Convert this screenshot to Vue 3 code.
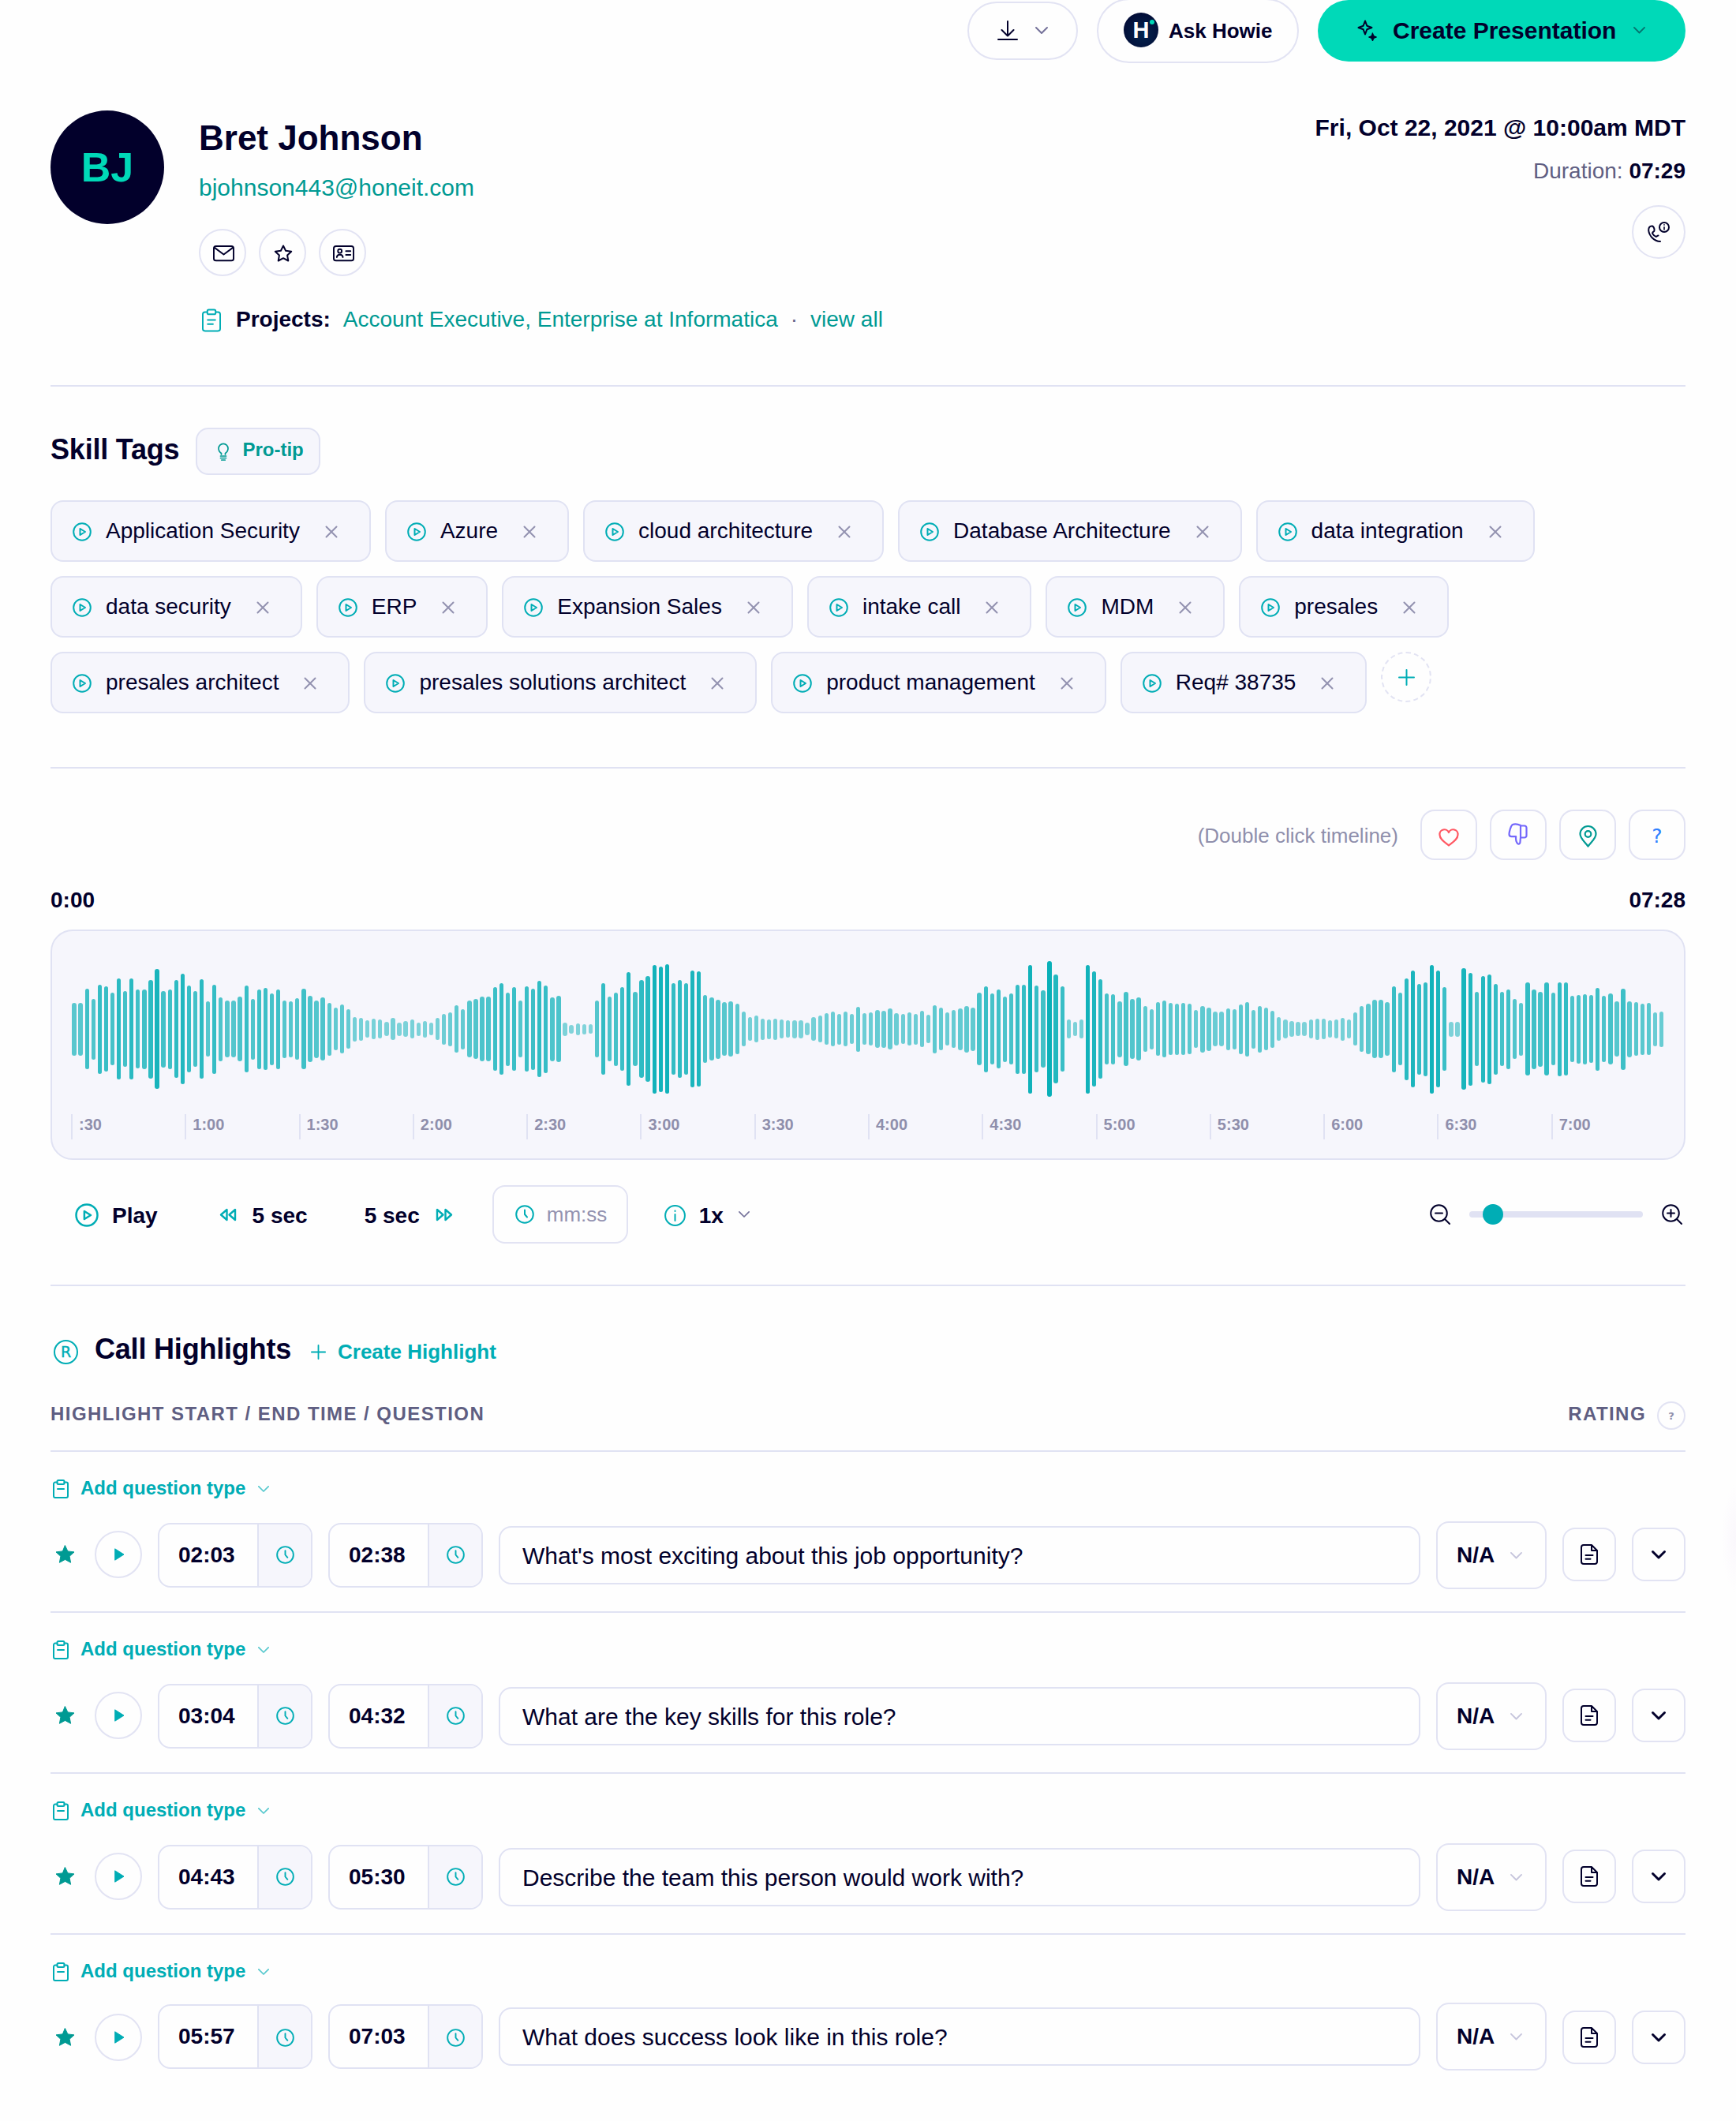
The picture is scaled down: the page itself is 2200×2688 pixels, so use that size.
<template>
  <main class="page">
    <!-- Top actions -->
    <header class="actions">
      <button class="pill download">
        <Icon name="download" />
        <Icon name="chevron" :size="16" class="muted-dark" />
      </button>
      <button class="pill howie">
        <span class="howie-logo">H<i></i></span>
        Ask Howie
      </button>
      <button class="pill create">
        <Icon name="sparkle" />
        <span>Create Presentation</span>
        <Icon name="chevron" :size="15" class="create-chevron" />
      </button>
    </header>

    <!-- Candidate profile -->
    <section class="profile">
      <div class="avatar">BJ</div>
      <div class="person">
        <h1>Bret Johnson</h1>
        <a class="email">bjohnson443@honeit.com</a>
        <div class="contact">
          <button class="round"><Icon name="mail" :size="27" /></button>
          <button class="round"><Icon name="star" /></button>
          <button class="round"><Icon name="card" :size="27" /></button>
        </div>
        <div class="projects">
          <Icon name="clipboard" />
          <strong>Projects:</strong>
          <a>Account Executive, Enterprise at Informatica</a>
          <span class="dot">·</span>
          <a>view all</a>
        </div>
      </div>
      <div class="meta">
        <p class="date">Fri, Oct 22, 2021 @ 10:00am MDT</p>
        <p class="duration">Duration: <strong>07:29</strong></p>
        <button class="round phone"><Icon name="phone" /></button>
      </div>
    </section>

    <!-- Skill tags -->
    <section class="skills">
      <div class="skills-head">
        <h2>Skill Tags</h2>
        <button class="pro-tip"><Icon name="bulb" /><span>Pro-tip</span></button>
      </div>
      <div class="tags">
        <div v-for="tag in tags" :key="tag" class="tag">
          <span class="tag-play"><Icon name="play" :size="24" /></span>
          <span>{{ tag }}</span>
          <span class="tag-remove"><Icon name="close" /></span>
        </div>
        <button class="add-tag"><Icon name="plus" :size="21" /></button>
      </div>
    </section>

    <!-- Waveform player -->
    <section class="player">
      <div class="markers">
        <span class="hint">(Double click timeline)</span>
        <button class="marker red"><Icon name="heart" /></button>
        <button class="marker purple"><Icon name="thumb" /></button>
        <button class="marker green"><Icon name="pin" /></button>
        <button class="marker blue">?</button>
      </div>
      <div class="times">
        <span>0:00</span>
        <span>07:28</span>
      </div>
      <div class="timeline">
        <div class="wave">
          <span
            v-for="(h, i) in bars"
            :key="i"
            class="bar"
            :style="{ height: h + 'px', opacity: 0.44 + h / 330 }"
          ></span>
        </div>
        <div class="ticks">
          <span v-for="t in ticks" :key="t" class="tick">{{ t }}</span>
        </div>
      </div>
      <div class="controls">
        <button class="ctl play"><Icon name="play" :size="30" /><span>Play</span></button>
        <button class="ctl back"><Icon name="rewind" /><span>5 sec</span></button>
        <button class="ctl fwd"><span>5 sec</span><Icon name="forward" /></button>
        <div class="goto"><Icon name="clock" :size="24" /><span>mm:ss</span></div>
        <button class="ctl speed">
          <Icon name="info" /><span>1x</span><Icon name="chevron" :size="14" class="muted-dark" />
        </button>
        <div class="zoom">
          <Icon name="zoomOut" />
          <div class="track"><div class="knob" :style="{ left: zoom + 'px' }"></div></div>
          <Icon name="zoomIn" />
        </div>
      </div>
    </section>

    <!-- Call highlights -->
    <section class="highlights">
      <div class="hl-head">
        <span class="r-mark">R</span>
        <h2>Call Highlights</h2>
        <button class="create-hl"><Icon name="plus" :size="19" /><span>Create Highlight</span></button>
      </div>
      <div class="hl-columns">
        <span>HIGHLIGHT START / END TIME / QUESTION</span>
        <span class="rating-label">RATING</span>
        <span class="help">?</span>
      </div>
      <article v-for="item in highlights" :key="item.start" class="highlight">
        <button class="type">
          <Icon name="clipboardSmall" /><span>Add question type</span>
          <Icon name="chevron" :size="14" class="faded" />
        </button>
        <div class="row">
          <span class="fav"><Icon name="starFilled" /></span>
          <button class="round play-btn"><Icon name="playFilled" /></button>
          <div v-for="time in [item.start, item.end]" :key="time" class="time-box">
            <span class="time">{{ time }}</span>
            <span class="time-icon"><Icon name="clock" :size="23" /></span>
          </div>
          <div class="question">{{ item.question }}</div>
          <div class="rating">N/A <Icon name="chevron" :size="15" /></div>
          <button class="square"><Icon name="doc" /></button>
          <button class="square"><Icon name="chevronBold" /></button>
        </div>
      </article>
    </section>
  </main>
</template>

<script setup>
import { ref, h } from "vue";

// [width, height, markup]
const icons = {
  download: [26, 26, '<path d="M13 1v18.5M5.5 12l7.5 7.5 7.5-7.5M1 24h24"/>'],
  chevron: [16, 9, '<path d="M1 1l7 7 7-7"/>'],
  chevronBold: [18, 11, '<path stroke-width="3" d="M1.5 1.5L9 9l7.5-7.5"/>'],
  sparkle: [26, 28, '<path d="M10 1.5l2.3 6.2 6.2 2.3-6.2 2.3-2.3 6.2-2.3-6.2L1.5 10l6.2-2.3z"/><path fill="currentColor" stroke-width="1" d="M19.5 17l1.5 3.5 3.5 1.5-3.5 1.5-1.5 3.5-1.5-3.5-3.5-1.5 3.5-1.5z"/>'],
  mail: [28, 21, '<rect x="1" y="1" width="26" height="19" rx="3"/><path d="M2 3l12 9 12-9"/>'],
  star: [24, 22, '<path d="M12 1.5l3.1 6.3 7.1 1-5.1 4.8 1.2 6.9-6.3-3.3-6.3 3.3 1.2-6.9-5.1-4.8 7.1-1z"/>'],
  starFilled: [25, 23, '<path fill="currentColor" stroke-width="1" d="M12.5.8l3.4 7.1 8.1 1-5.9 5.4 1.5 8-7.1-3.9-7.1 3.9 1.5-8L1 8.9l8.1-1z"/>'],
  card: [28, 21, '<rect x="1" y="1" width="26" height="19" rx="3"/><circle cx="9" cy="7.5" r="2.5"/><path d="M5 15.5c.6-4.500 7.400-4.500 8 0M17 7.500h6M17 12.500h6"/>'],
  clipboard: [25, 30, '<path d="M7 4H4a3 3 0 0 0-3 3v19a3 3 0 0 0 3 3h17a3 3 0 0 0 3-3V7a3 3 0 0 0-3-3h-3"/><rect x="7" y="1" width="11" height="6" rx="2"/><path d="M7.500 14.500h10M7.500 20h7"/>'],
  clipboardSmall: [20, 24, '<path d="M5.500 3.500H3a2 2 0 0 0-2 2V21a2 2 0 0 0 2 2h14a2 2 0 0 0 2-2V5.500a2 2 0 0 0-2-2h-2.500"/><rect x="5.500" y="1" width="9" height="5" rx="1.500"/><path d="M6 12h8"/>'],
  phone: [28, 27, '<path d="M6 5.500C2.500 5 1 8 1.200 11 2 18 8 24.500 16 25M6 5.500c2 1 3.200 4.500 2.300 6.300-1.600 1-3 1.900-2 3.500 1 1.600 2.600 3 4.200 3.600 1.200 0 1.700-1.500 3-1.500"/><circle cx="21" cy="7" r="6"/><path stroke-width="1.600" d="M21 6.700v3.300M21 3.800v.3"/>'],
  bulb: [14, 23, '<path d="M4.500 15v-1.500C2.200 12 1 10 1 7.300a6 6 0 0 1 12 0c0 2.700-1.200 4.700-3.500 6.200V15M3.500 17h7M3.500 19.500h7M4.800 22h4.400" stroke-width="1.700"/>'],
  play: [24, 24, '<circle cx="12" cy="12" r="10.800"/><path d="M9.500 8l6.500 4-6.500 4z"/>'],
  playFilled: [13, 16, '<path fill="currentColor" stroke-width="1" d="M1 1l11 7-11 7z"/>'],
  close: [14, 14, '<path d="M.5.500l13 13M13.500.500l-13 13"/>'],
  plus: [21, 21, '<path d="M10.500 1v19M1 10.500h19"/>'],
  heart: [26, 23, '<path stroke-width="2.200" d="M13 21.500C8 17.500 1.500 13.500 1.500 8a6 6 0 0 1 11.500-3A6 6 0 0 1 24.500 8c0 5.500-6.500 9.500-11.500 13.500z"/>'],
  thumb: [25, 28, '<path stroke-width="2.200" d="M16 3C12 1 8 1 5.500 2.200 3.500 4 1.700 11 1.500 14c0 2 1 3.200 3 3.200h5.600c-.3 3.300.3 6.800 2 8.800 1.400 1.200 3 .4 3.300-1.200L16 18zM16 3.500h5a2.500 2.500 0 0 1 2.500 2.500v10a2.500 2.500 0 0 1-2.500 2.500h-5"/>'],
  pin: [23, 28, '<path stroke-width="2.200" d="M11.500 26.500C7 20.500 1.500 16.500 1.500 11a10 10 0 0 1 20 0c0 5.500-5.500 9.500-10 15.500z"/><circle cx="11.500" cy="11" r="3.800" stroke-width="2.200"/>'],
  rewind: [22, 17, '<path stroke-width="2.400" d="M9.500 2v13L2 8.500zM20 2v13l-7.500-6.500z"/>'],
  forward: [22, 17, '<path stroke-width="2.400" d="M12.500 2v13l7.500-6.500zM2 2v13l7.500-6.500z"/>'],
  clock: [24, 24, '<circle cx="12" cy="12" r="10.800"/><path d="M12 6.500V12l3 3.500"/>'],
  info: [27, 27, '<circle cx="13.500" cy="13.500" r="12.400"/><path d="M13.500 12v8M13.500 7.500v.5"/>'],
  zoomOut: [26, 26, '<circle cx="11.500" cy="11.500" r="10.300"/><path d="M19 19l6 6M7 11.500h9"/>'],
  zoomIn: [26, 26, '<circle cx="11.500" cy="11.500" r="10.300"/><path d="M19 19l6 6M7 11.500h9M11.500 7v9"/>'],
  doc: [22, 26, '<path d="M14 1H4a3 3 0 0 0-3 3v18a3 3 0 0 0 3 3h14a3 3 0 0 0 3-3V8zM14 1v7h7M6.500 14h9M6.500 18.700h6"/>'],
};

function Icon(props) {
  const [w, hgt, markup] = icons[props.name];
  const width = props.size || w;
  return h("svg", {
    width,
    height: (width * hgt) / w,
    viewBox: `0 0 ${w} ${hgt}`,
    fill: "none",
    stroke: "currentColor",
    "stroke-width": 2,
    "stroke-linecap": "round",
    "stroke-linejoin": "round",
    innerHTML: markup,
  });
}
Icon.props = ["name", "size"];

const zoom = ref(17);

const tags = ref([
  "Application Security",
  "Azure",
  "cloud architecture",
  "Database Architecture",
  "data integration",
  "data security",
  "ERP",
  "Expansion Sales",
  "intake call",
  "MDM",
  "presales",
  "presales architect",
  "presales solutions architect",
  "product management",
  "Req# 38735",
]);

const ticks = [
  ":30", "1:00", "1:30", "2:00", "2:30", "3:00", "3:30",
  "4:00", "4:30", "5:00", "5:30", "6:00", "6:30", "7:00",
];

// Peak levels, one per bar
const peaks = [
  101, 101, 153, 116, 170, 162, 138, 192, 144, 192, 150, 152, 187, 228, 145, 151, 186, 210, 165, 144,
  189, 105, 170, 121, 108, 108, 123, 165, 116, 151, 156, 136, 152, 110, 107, 117, 153, 126, 110, 120,
  100, 81, 93, 75, 47, 44, 33, 39, 36, 27, 42, 25, 30, 36, 26, 32, 24, 42, 58, 65,
  90, 77, 108, 114, 123, 123, 159, 174, 140, 159, 108, 162, 155, 183, 166, 121, 126, 26, 17, 23,
  20, 18, 108, 174, 123, 139, 159, 216, 141, 186, 201, 244, 238, 246, 174, 186, 174, 222, 219, 129,
  120, 113, 102, 105, 96, 66, 45, 51, 41, 38, 41, 36, 33, 35, 35, 24, 45, 51, 60, 66,
  59, 66, 57, 86, 60, 63, 72, 70, 78, 62, 57, 63, 59, 69, 54, 91, 81, 63, 72, 80,
  88, 82, 138, 163, 135, 150, 124, 135, 170, 170, 244, 165, 147, 258, 207, 162, 36, 27, 36, 244,
  219, 189, 135, 133, 107, 141, 114, 120, 87, 77, 102, 108, 99, 97, 99, 96, 72, 89, 82, 66,
  66, 80, 76, 95, 104, 74, 89, 81, 71, 45, 36, 30, 27, 27, 36, 41, 39, 33, 36, 44,
  36, 63, 87, 96, 111, 111, 102, 163, 138, 194, 222, 172, 178, 244, 222, 159, 28, 28, 231, 215,
  141, 202, 209, 172, 141, 152, 114, 101, 177, 152, 143, 177, 138, 178, 177, 126, 130, 134, 129, 157,
  126, 135, 105, 155, 106, 102, 98, 99, 65, 68,
];
const bars = peaks.map((p) => Math.round((p * 2) / 3));

const highlights = ref([
  { start: "02:03", end: "02:38", question: "What's most exciting about this job opportunity?" },
  { start: "03:04", end: "04:32", question: "What are the key skills for this role?" },
  { start: "04:43", end: "05:30", question: "Describe the team this person would work with?" },
  { start: "05:57", end: "07:03", question: "What does success look like in this role?" },
]);
</script>

<style>
body {
  margin: 0;
  background: #fefefe;
}
</style>

<style scoped>
.page {
  box-sizing: border-box;
  height: 2688px;
  padding: 0 64px;
  overflow: hidden;
  font-family: "Liberation Sans", Arial, sans-serif;
  font-size: 28px;
  color: #02002b;
  background: radial-gradient(ellipse 18px 70px at 2200px 1950px, #faf7fc, #fefefe);
}

.page *,
.page *::before {
  box-sizing: border-box;
}

svg {
  display: block;
  flex: none;
  overflow: visible;
}

h1,
h2,
p {
  margin: 0;
}

button {
  display: flex;
  align-items: center;
  padding: 0;
  border: 0;
  background: none;
  font: inherit;
  color: inherit;
  white-space: nowrap;
}

a {
  color: #009a93;
}

/* Top actions */
.actions {
  display: flex;
  justify-content: flex-end;
  align-items: center;
  gap: 24px;
  height: 78px;
}

.pill {
  flex: none;
  border: 2px solid #e2e3f3;
  border-radius: 41px;
  font-weight: bold;
}

.download {
  width: 140px;
  height: 74px;
  padding-left: 36px;
  gap: 22px;
}

.muted-dark {
  color: #75729a;
}

.download .muted-dark {
  margin-bottom: 2px;
}

.howie {
  width: 256px;
  height: 82px;
  padding-left: 32px;
  gap: 13px;
  font-size: 26px;
}

.howie-logo {
  position: relative;
  width: 44px;
  height: 44px;
  margin-bottom: 2px;
  border-radius: 50%;
  background: radial-gradient(circle at 55% 60%, #04264f, #020a35 80%);
  color: #fff;
  font-size: 29px;
  line-height: 44px;
  text-align: center;
}

.howie-logo i {
  position: absolute;
  top: 9px;
  right: 5px;
  width: 6px;
  height: 6px;
  border-radius: 50%;
  background: #00d9b8;
}

.create {
  width: 466px;
  height: 78px;
  padding-left: 50px;
  border: 0;
  background: #00d9b8;
  font-size: 30px;
}

.create span {
  margin: 0 22px 0 19px;
}

.create-chevron {
  margin-bottom: 2px;
  color: #04756f;
}

/* Profile */
.profile {
  display: flex;
  height: 350px;
  margin-top: 62px;
  border-bottom: 2px solid #e0e2f3;
}

.avatar {
  width: 144px;
  height: 144px;
  border-radius: 50%;
  background: #02002b;
  color: #00d9b8;
  font-size: 52px;
  font-weight: bold;
  line-height: 145px;
  text-align: center;
}

.person {
  margin-left: 44px;
  padding-top: 10px;
}

h1 {
  font-size: 44px;
  line-height: 50px;
}

.email {
  display: block;
  margin-top: 20px;
  font-size: 30px;
  line-height: 36px;
}

.contact {
  display: flex;
  gap: 16px;
  margin-top: 34px;
}

.round {
  justify-content: center;
  width: 60px;
  height: 60px;
  border: 2px solid #e2e3f3;
  border-radius: 50%;
}

.contact .round {
  padding: 2px 0 0 2px;
}

.projects {
  display: flex;
  align-items: center;
  margin-top: 38px;
  line-height: 32px;
}

.projects svg {
  margin: 3px 19px 0 4px;
  color: #00adb5;
}

.projects strong {
  margin-right: 16px;
}

.projects svg {
  width: 24px;
}

.dot {
  margin: 0 16px 0 16px;
  color: #66658a;
}

.meta {
  display: flex;
  flex-direction: column;
  align-items: flex-end;
  margin-left: auto;
  padding-top: 4px;
}

.date {
  font-size: 30px;
  font-weight: bold;
  line-height: 36px;
}

.duration {
  margin-top: 21px;
  line-height: 32px;
  color: #5f5e82;
}

.duration strong {
  color: #02002b;
}

.phone {
  width: 68px;
  height: 68px;
  margin-top: 27px;
}

/* Skill tags */
.skills {
  height: 484px;
  padding-top: 52px;
  border-bottom: 2px solid #e0e2f3;
}

.skills-head {
  display: flex;
  align-items: center;
  gap: 21px;
}

h2 {
  font-size: 36px;
  letter-spacing: -0.2px;
  line-height: 43px;
}

.skills-head h2 {
  padding-bottom: 5px;
}

.pro-tip {
  width: 158px;
  height: 60px;
  padding-left: 26px;
  gap: 17px;
  border: 2px solid #e0e2f3;
  border-radius: 16px;
  background: #f6f6fc;
  color: #009a93;
  font-size: 24px;
  font-weight: bold;
}

.pro-tip span {
  padding-bottom: 4px;
}

.tags {
  display: flex;
  flex-wrap: wrap;
  gap: 18px;
  width: 1960px;
  margin-top: 32px;
}

.tag {
  display: flex;
  align-items: center;
  height: 78px;
  padding: 0 34px 0 24px;
  border: 2px solid #e0e2f3;
  border-radius: 16px;
  background: #f6f6fc;
}

.tag-play {
  width: 28px;
  margin-right: 16px;
  padding: 2px 0 0 2px;
  color: #00adb5;
}

.tag-remove {
  display: flex;
  justify-content: center;
  width: 28px;
  margin-left: 26px;
  padding-top: 2px;
  color: #9392b0;
}

.add-tag {
  justify-content: center;
  width: 64px;
  height: 64px;
  border: 2px dashed #e2e3f3;
  border-radius: 50%;
  color: #00adb5;
}

/* Player */
.player {
  height: 656px;
  padding-top: 52px;
  border-bottom: 2px solid #e0e2f3;
}

.markers {
  display: flex;
  justify-content: flex-end;
  align-items: center;
  gap: 16px;
}

.hint {
  margin-right: 12px;
  padding-top: 2px;
  color: #8f8fac;
  font-size: 26px;
}

.marker {
  justify-content: center;
  width: 72px;
  height: 64px;
  border: 2px solid #e2e3f3;
  border-radius: 18px;
}

.red {
  color: #ff5863;
}

.purple {
  padding: 0 2px 2px 0;
  color: #7468fb;
}

.green {
  padding-top: 4px;
  color: #009a93;
}

.red svg {
  margin-top: 6px;
}

.blue {
  padding-top: 2px;
  color: #2f80ff;
  font-family: "DejaVu Sans", sans-serif;
  font-size: 25px;
}

.times {
  display: flex;
  justify-content: space-between;
  margin: 35px 0 21px;
  font-weight: bold;
  line-height: 32px;
}

.timeline {
  height: 292px;
  padding: 24px;
  border: 2px solid #e0e2f3;
  border-radius: 28px;
  background: #f6f6fc;
}

.wave {
  display: flex;
  align-items: center;
  height: 200px;
}

.bar {
  flex: 1;
  margin: 0 1.4px;
  border-radius: 3px;
  background: #00adb5;
}

.ticks {
  display: grid;
  grid-template-columns: repeat(14, 1fr);
  margin-top: 8px;
}

.tick {
  height: 32px;
  padding-left: 8px;
  border-left: 2px solid #e0e2f3;
  color: #8f8fac;
  font-size: 20px;
  font-weight: bold;
  line-height: 27px;
}

.controls {
  display: flex;
  align-items: center;
  height: 74px;
  margin-top: 32px;
}

.ctl {
  font-weight: bold;
}

.ctl svg {
  color: #00adb5;
}

.ctl span {
  padding-top: 3px;
}

.play {
  margin-left: 31px;
  gap: 17px;
}

.play svg,
.speed svg:first-child {
  margin-top: 2px;
}

.back {
  margin-left: 78px;
  gap: 20px;
}

.fwd {
  margin-left: 72px;
  gap: 20px;
}

.goto {
  display: flex;
  align-items: center;
  width: 172px;
  height: 74px;
  margin-left: 50px;
  padding-left: 27px;
  gap: 16px;
  border: 2px solid #e2e3f3;
  border-radius: 16px;
  color: #9392b0;
  font-size: 26px;
}

.goto svg {
  color: #00adb5;
}

.speed {
  margin-left: 46px;
  gap: 17px;
}

.speed .muted-dark {
  margin-left: 2px;
  color: #75729a;
}

.zoom {
  display: flex;
  align-items: center;
  gap: 24px;
  margin-left: auto;
  padding-right: 4px;
}

.track {
  position: relative;
  width: 220px;
  height: 8px;
  border-radius: 4px;
  background: #e0e2f3;
}

.knob {
  position: absolute;
  top: -9px;
  width: 26px;
  height: 26px;
  border-radius: 50%;
  background: #00adb5;
}

/* Highlights */
.hl-head {
  display: flex;
  align-items: center;
  margin-top: 58px;
}

.r-mark {
  width: 31px;
  height: 31px;
  margin: 7px 21px 0 4px;
  border: 2px solid #00adb5;
  border-radius: 50%;
  color: #00adb5;
  font-family: "DejaVu Sans", sans-serif;
  font-size: 19px;
  line-height: 27px;
  text-align: center;
  -webkit-text-stroke: 0.4px #00adb5;
}

.create-hl {
  margin: 7px 0 0 25px;
  gap: 15px;
  color: #00adb5;
  font-size: 26px;
  font-weight: bold;
}

.hl-columns {
  display: flex;
  align-items: center;
  height: 64px;
  margin-top: 45px;
  padding-bottom: 26px;
  border-bottom: 2px solid #e0e2f3;
  color: #5f5e82;
  font-size: 24px;
  font-weight: bold;
  letter-spacing: 0.06em;
}

.hl-columns span {
  padding-bottom: 4px;
}

.rating-label {
  margin-left: auto;
}

.hl-columns .help {
  width: 36px;
  height: 36px;
  margin-left: 14px;
  padding: 0;
  border: 2px solid #e2e3f3;
  border-radius: 50%;
  color: #8f8fac;
  font-family: "DejaVu Sans", sans-serif;
  font-size: 13px;
  letter-spacing: 0;
  line-height: 33px;
  text-align: center;
}

.highlight {
  height: 204px;
  padding-top: 30px;
  border-bottom: 2px solid #e0e2f3;
}

.type {
  height: 32px;
  padding-left: 3px;
  color: #00adb5;
  font-size: 24px;
  font-weight: bold;
}

.type span {
  margin: 0 16px 0 15px;
}

.type svg {
  margin-top: 2px;
}

.faded {
  opacity: 0.65;
}

.row {
  display: flex;
  align-items: center;
  gap: 20px;
  height: 86px;
  margin-top: 26px;
}

.fav {
  display: flex;
  justify-content: center;
  width: 36px;
  margin-bottom: 3px;
  color: #009a93;
}

.play-btn {
  margin-bottom: 2px;
  padding-left: 2px;
  color: #00adb5;
}

.time-box {
  display: flex;
  width: 196px;
  height: 82px;
  border: 2px solid #e0e2f3;
  border-radius: 16px;
  overflow: hidden;
}

.time {
  width: 124px;
  padding-left: 24px;
  font-weight: bold;
  line-height: 78px;
}

.time-icon {
  display: flex;
  flex: 1;
  justify-content: center;
  align-items: center;
  padding-bottom: 2px;
  border-left: 2px solid #e0e2f3;
  background: #f6f6fc;
  color: #00adb5;
}

.question {
  flex: 1;
  height: 74px;
  padding-left: 28px;
  border: 2px solid #e0e2f3;
  border-radius: 16px;
  font-size: 30px;
  line-height: 71px;
}

.rating {
  display: flex;
  align-items: center;
  width: 140px;
  height: 86px;
  padding-left: 24px;
  gap: 20px;
  border: 2px solid #e2e3f3;
  border-radius: 16px;
  font-weight: bold;
}

.rating svg {
  color: #c6c5dc;
}

.square {
  justify-content: center;
  width: 68px;
  height: 68px;
  margin-bottom: 2px;
  border: 2px solid #e2e3f3;
  border-radius: 16px;
}

.highlight:last-child {
  border-bottom: 0;
}

.highlight:last-child .time-box,
.highlight:last-child .question,
.highlight:last-child .rating {
  margin-top: -4px;
}

.highlight:last-child .time-icon {
  padding: 2px 0 0;
}
</style>
